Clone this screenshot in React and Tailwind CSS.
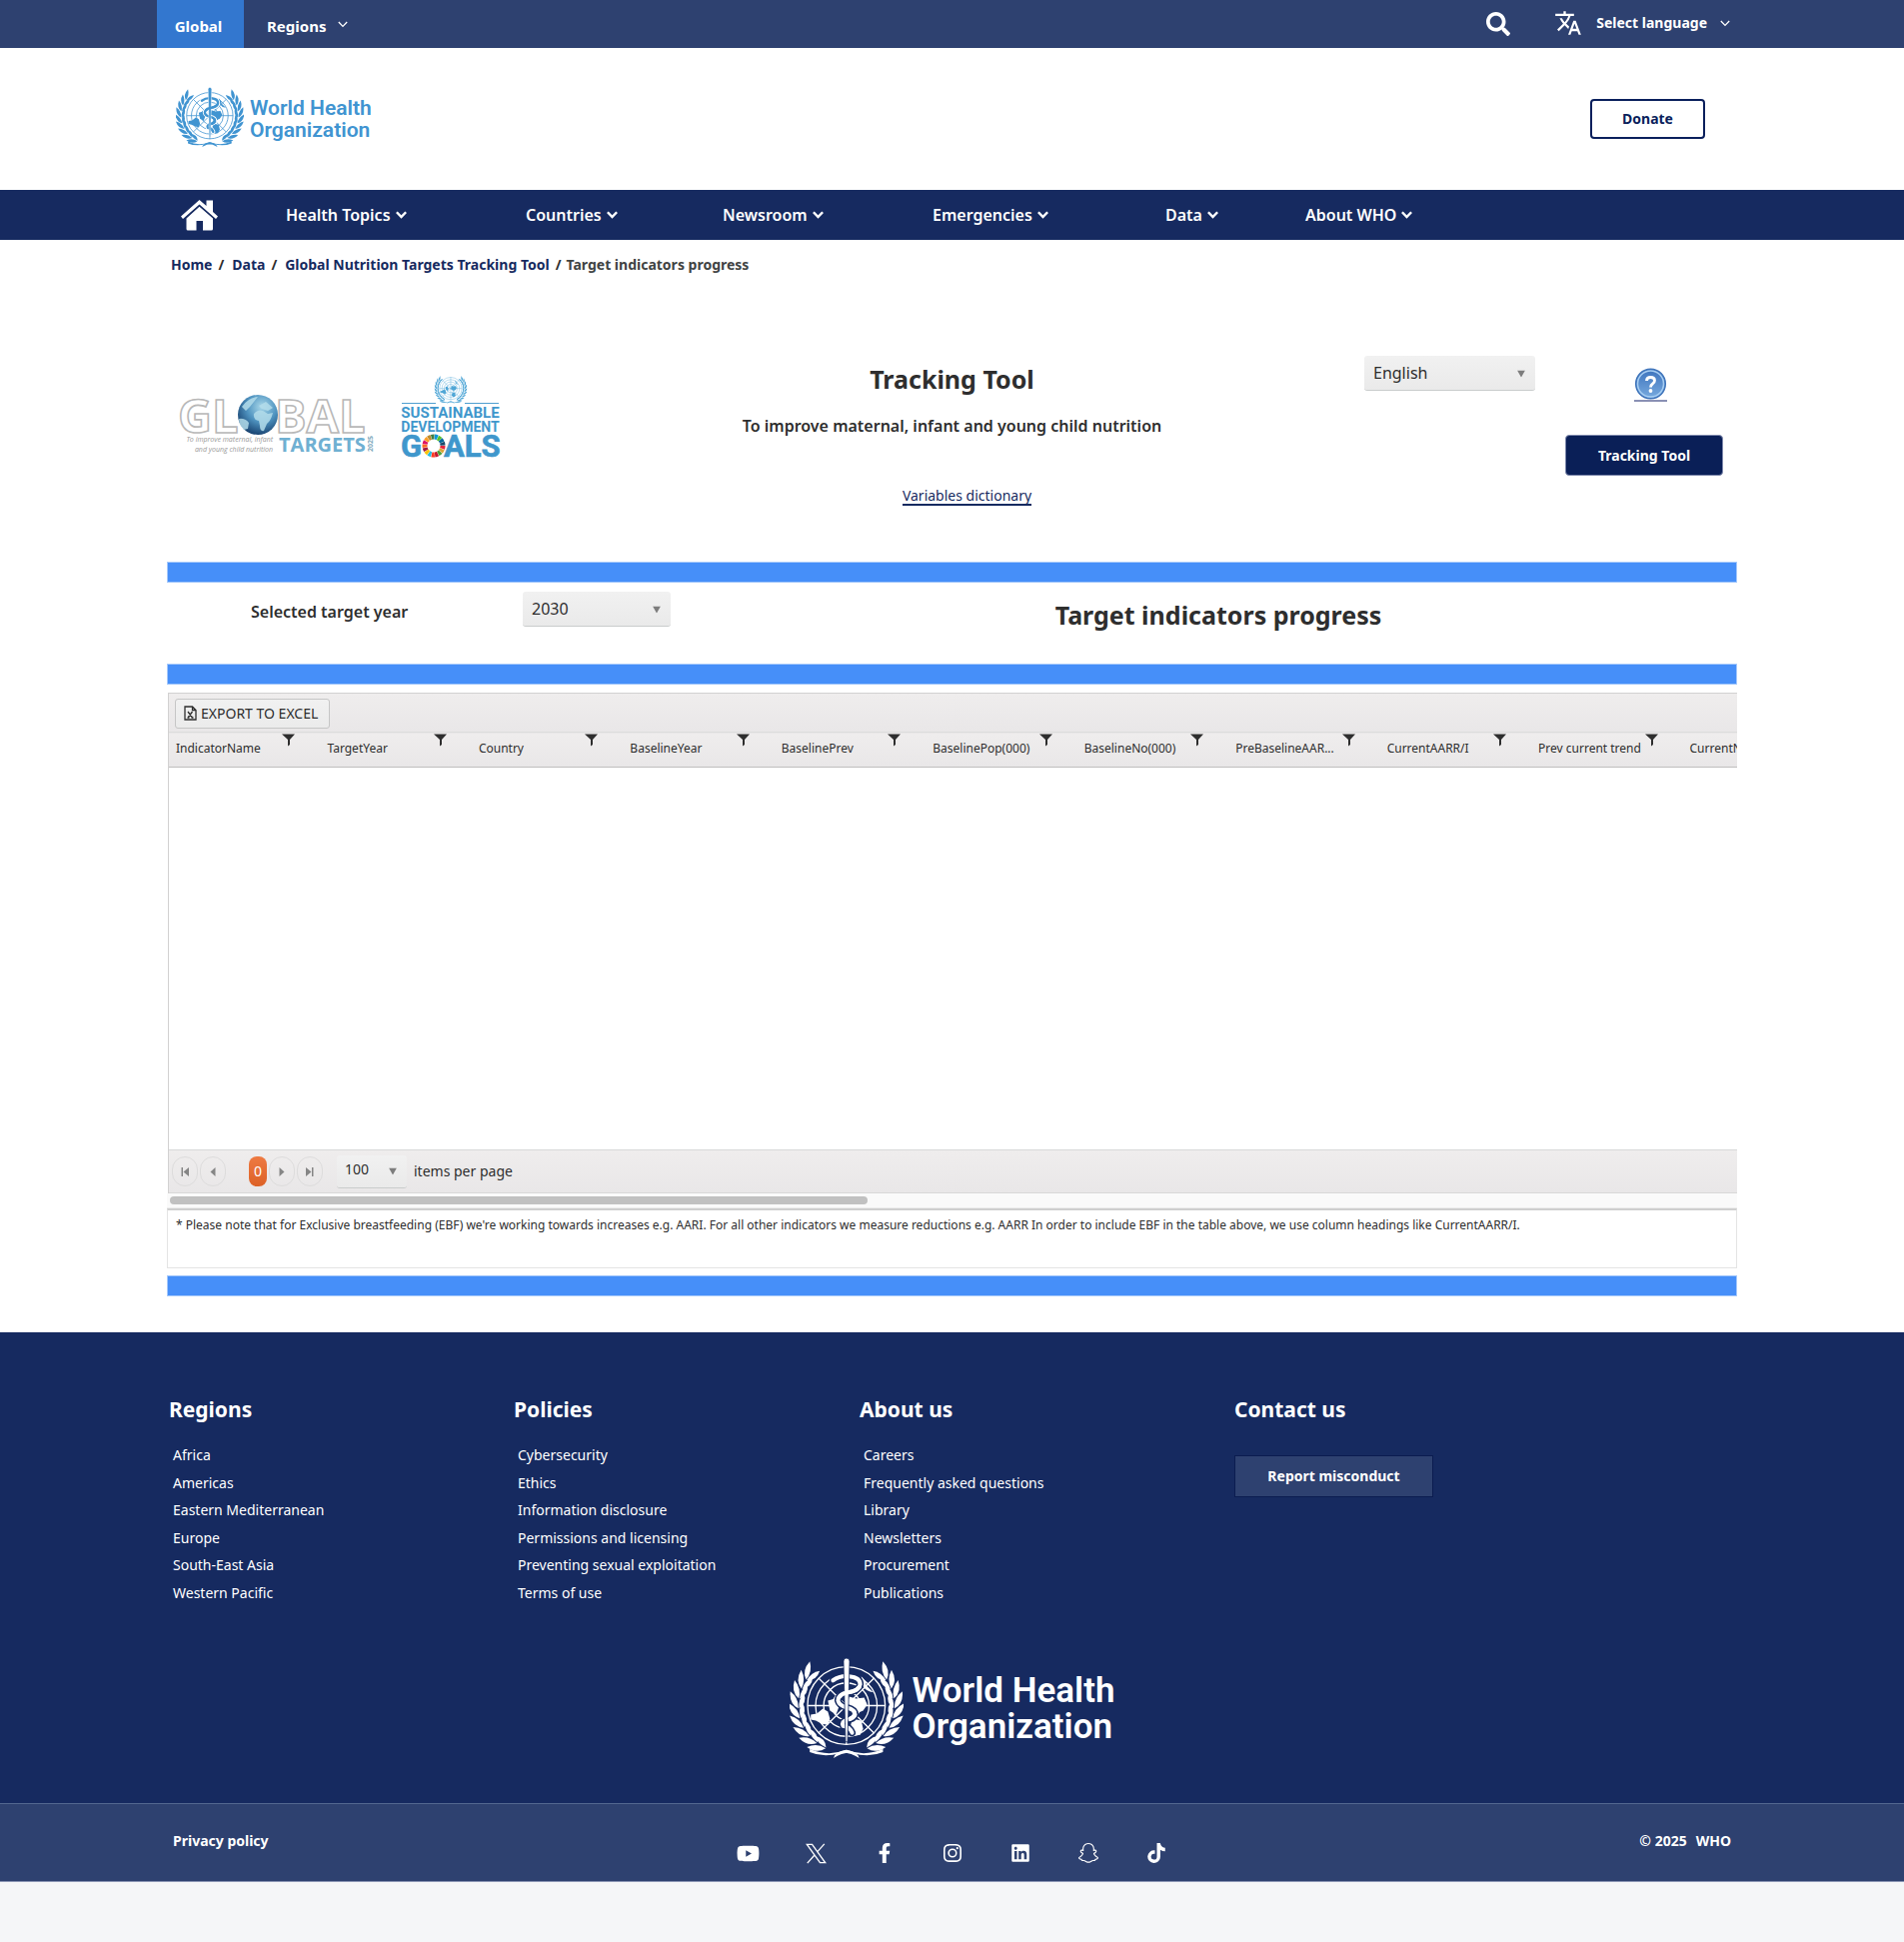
import React from "react";
import { FaSearch, FaFacebookF, FaYoutube, FaLinkedin, FaTiktok } from "react-icons/fa";
import { MdTranslate } from "react-icons/md";
import { BsInstagram, BsSnapchat } from "react-icons/bs";

const NAVY = "#162a60";

function Chevron({ className, width = 1.3 }) {
  return (
    <svg viewBox="0 0 10 7" className={className} fill="none" stroke="currentColor" strokeWidth={width} aria-hidden="true">
      <path d="M0.8 1 L5 5.4 L9.2 1" />
    </svg>
  );
}

function XLogo({ className }) {
  return (
    <svg viewBox="0 0 24 24" className={className} fill="none" stroke="currentColor" strokeWidth="1.5" aria-hidden="true">
      <path d="M1.500 1.500H7.500L22.500 22.500H16.500Z M21.500 1L13.300 10.200 M10.500 13.500L2 23" />
    </svg>
  );
}

function Laurel() {
  const leaves = [];
  for (let i = 0; i < 9; i++) {
    const deg = 118 + i * 12.2;
    const a = (deg * Math.PI) / 180;
    const x = 56.5 + 48 * Math.cos(a);
    const y = 47 + 47 * Math.sin(a);
    leaves.push(
      <g key={i} transform={`translate(${x} ${y}) rotate(${deg - 180})`}>
        <path d="M0 2 Q-9 -3 -7.500 -15 Q1 -8 0 2Z" />
        <path d="M1 2 Q0 -7 6 -13 Q9 -3 1 2Z" />
      </g>
    );
  }
  return (
    <g>
      {leaves}
      <path d="M20 90 Q38 98 56 91 Q68 93 69 99 Q60 93 50 94 Q34 99 20 93Z" />
    </g>
  );
}

function Emblem({ className, color, back, staff = true }) {
  return (
    <svg viewBox="0 0 113 100" className={className} fill={color} aria-hidden="true">
      <g fill="none" stroke={color} strokeWidth="1.3">
        <circle cx="56.3" cy="47" r="38.5" />
        <circle cx="56.3" cy="47" r="30.5" />
        <circle cx="56.3" cy="47" r="22.5" />
        <circle cx="56.3" cy="47" r="14" />
        <path d="M18 47H95M56.3 8V86M29 20L83.500 74M83.500 20L29 74" />
      </g>
      <path d="M21 56 L27 55 L33 50 L38 53 L40 60 L38 66 L32 65 L26 62 L21 61Z" />
      <path d="M59 38 L66 40 L74 39 L77 46 L73 52 L66 55 L61 52 L57 49Z" />
      <path d="M62 60 L71 62 L73 70 L70 76 L64 77 L60 70Z" />
      <path d="M38 42 L45 40 L49 48 L46 56 L40 52Z" />
      <path d="M71 18 Q76 22 76 27 L83 34 Q76 33 73 28Z" />
      {staff && (
        <g>
          <g fill="none" strokeLinecap="round">
            {[[back, 7], [color, 4]].map(([c, w]) => (
              <path
                key={w}
                stroke={c}
                strokeWidth={w}
                d="M43 22 Q50 17 59 18 Q70 19 70 26 Q69 32 58 34 Q48 36 48 42 Q49 47 57 49 Q65 51 65 56 Q64 60 57 61 Q51 63 53 67 Q60 68 62 74"
              />
            ))}
          </g>
          <path d="M53.500 3 Q53.500 0 56.300 0 Q59.500 0 59.500 3 L57.500 83 H55.500Z" stroke={back} strokeWidth="0.800" />
          <path fill="none" stroke={color} strokeWidth="4" strokeLinecap="round" d="M69 29 Q66 33 58 34 Q52 35 50 38 M64 53 Q66 57 60 60" />
        </g>
      )}
      <Laurel />
      <g transform="translate(112.600 0) scale(-1 1)">
        <Laurel />
      </g>
    </svg>
  );
}

function HomeIcon() {
  return (
    <svg viewBox="0 0 37 31" className="h-[31px] w-[37px]" fill="white" aria-hidden="true">
      <path d="M18.500 0 L25.500 6 V0.500 H32 V12 L37 16.500 L35 19 L18.500 4.600 L2 19 L0 16.500Z" />
      <path d="M18.500 6.800 L32 18.600 V29 Q32 30.500 30.500 30.500 H22 V21 H15.500 V30.500 H7 Q5.500 30.500 5.500 29 V18.600Z" />
    </svg>
  );
}

function Funnel() {
  return (
    <svg viewBox="0 0 13 13" className="h-[13px] w-[13px]" fill="#2e2e2e" aria-hidden="true">
      <path d="M0 0.500H13L8 6V11L6 12.500V6Z" />
    </svg>
  );
}

function DropDown({ label, value, options, className, arrow }) {
  return (
    <div className="relative inline-flex">
      <select
        aria-label={label}
        defaultValue={value}
        className={"appearance-none rounded-[3px] border-b border-[#c9cccc] bg-linear-to-b from-[#f1f1f1] to-[#eaeaea] text-[#2e2e2e] outline-none " + className}
      >
        {options.map((o) => (
          <option key={o}>{o}</option>
        ))}
      </select>
      <svg viewBox="0 0 8 7" className={"pointer-events-none absolute top-1/2 h-[7px] w-[8px] -translate-y-1/2 " + arrow} fill="#7d7d7d" aria-hidden="true">
        <path d="M0 0H8L4 7Z" />
      </svg>
    </div>
  );
}

function GlobalTargetsLogo() {
  return (
    <svg viewBox="0 0 196 62" className="h-[62px] w-[196px] overflow-visible" role="img" aria-label="Global Targets 2025">
      <defs>
        <radialGradient id="globe" cx="0.600" cy="0.300" r="0.750">
          <stop offset="0" stopColor="#a9d8ea" />
          <stop offset="0.500" stopColor="#4f93c0" />
          <stop offset="1" stopColor="#123a68" />
        </radialGradient>
      </defs>
      <g fontFamily="Open Sans, sans-serif" fontWeight="700" fontSize="47" fill="white" stroke="#b8b8b8" strokeWidth="1.600">
        <text x="-2" y="38">GL</text>
        <text x="95" y="38">BAL</text>
      </g>
      <circle cx="78" cy="20" r="20" fill="url(#globe)" />
      <path fill="#b3dcea" d="M74 19 Q78 14 83 16 L88 19 L93 18 Q91 26 87 29 L84 36 Q80 37 80 31 L79 26 Q73 25 74 19Z M59 24 Q65 23 69 28 L68 34 L64 35 Q59 30 59 24Z M62 12 Q68 3 78 2 L74 7 L70 12 L66 16Z M79 11 L86 7 L93 13 L88 16 L82 14Z" opacity="0.850" />
      <g fontFamily="Open Sans, sans-serif" fontStyle="italic" fontSize="7" fill="#999999" textAnchor="end">
        <text x="93" y="47">To improve maternal, infant</text>
        <text x="93" y="57">and young child nutrition</text>
      </g>
      <text x="99" y="57" fontFamily="Open Sans, sans-serif" fontWeight="700" fontSize="20" fill="#6fb0d2">TARGETS</text>
      <text transform="translate(193 57) rotate(-90)" fontFamily="Open Sans, sans-serif" fontWeight="700" fontSize="7" fill="#7fa9bd">2025</text>
    </svg>
  );
}

const SDG = ["#e5243b", "#dda63a", "#4c9f38", "#c5192d", "#ff3a21", "#26bde2", "#fcc30b", "#a21942", "#fd6925", "#dd1367", "#fd9d24", "#bf8b2e", "#3f7e44", "#0a97d9", "#56c02b", "#00689d", "#19486a"];

function SdgLogo() {
  return (
    <svg viewBox="0 0 100 84" className="h-[84px] w-[100px] overflow-visible" role="img" aria-label="Sustainable Development Goals">
      <svg x="33" y="0" width="34" height="29" viewBox="0 0 113 100">
        <Emblem color="#4fa6d6" back="white" staff={false} />
      </svg>
      <path d="M1 28.500H35M64 28.500H98" stroke="#4f9fcf" strokeWidth="1" />
      <g fill="#3f97cc" fontFamily="Roboto, sans-serif" fontWeight="700" textAnchor="middle">
        <text x="49.500" y="43" fontSize="15">SUSTAINABLE</text>
        <text x="49.500" y="57" fontSize="14">DEVELOPMENT</text>
      </g>
      <g fill="#3f97cc" stroke="#3f97cc" strokeWidth="0.600" fontFamily="Roboto, sans-serif" fontWeight="700" fontSize="31">
        <text x="0" y="82">G</text>
        <text x="43" y="82">ALS</text>
      </g>
      <g transform="translate(33 71)">
        {SDG.map((c, i) => (
          <circle key={c} r="9" fill="none" stroke={c} strokeWidth="5" pathLength="170" strokeDasharray="9 161" strokeDashoffset={-i * 10} />
        ))}
      </g>
    </svg>
  );
}

const nav = ["Health Topics", "Countries", "Newsroom", "Emergencies", "Data", "About WHO"];
const columns = ["IndicatorName", "TargetYear", "Country", "BaselineYear", "BaselinePrev", "BaselinePop(000)", "BaselineNo(000)", "PreBaselineAAR...", "CurrentAARR/I", "Prev current trend", "CurrentNo(000)"];
const footer = [
  ["Regions", ["Africa", "Americas", "Eastern Mediterranean", "Europe", "South-East Asia", "Western Pacific"]],
  ["Policies", ["Cybersecurity", "Ethics", "Information disclosure", "Permissions and licensing", "Preventing sexual exploitation", "Terms of use"]],
  ["About us", ["Careers", "Frequently asked questions", "Library", "Newsletters", "Procurement", "Publications"]],
];
const social = [
  ["YouTube", FaYoutube, "size-[23px]"],
  ["X", XLogo, "size-[21px]"],
  ["Facebook", FaFacebookF, "size-[20px]"],
  ["Instagram", BsInstagram, "size-[18px]"],
  ["LinkedIn", FaLinkedin, "size-[20px]"],
  ["Snapchat", BsSnapchat, "size-[20px]"],
  ["TikTok", FaTiktok, "size-[20px]"],
];

const Bar = () => <div className="h-[21px] border border-[#a3c7fb] bg-[#468ff9]" />;

function PageButton({ label, d }) {
  return (
    <button aria-label={label} className="flex h-[30px] w-[26px] items-center justify-center rounded-full border border-[#dddcdc]">
      <svg viewBox="0 0 8 9" className="h-[9px] w-[8px]" fill="#858585" aria-hidden="true">
        <path d={d} />
      </svg>
    </button>
  );
}

export default function App() {
  return (
    <div className="min-h-screen bg-[#f5f6f8] font-['Noto_Sans',sans-serif] text-[#2e2e2e]">
      <div className="bg-[#2e4170] text-white">
        <div className="mx-auto flex h-12 max-w-[1591px] text-sm font-bold">
          <a href="#global" className="flex w-[87px] items-center justify-center bg-[#3377cf] pt-[5px] pr-1 text-[15px]">Global</a>
          <button className="flex items-center gap-3 pt-[5px] pl-[23px] text-[15px] font-bold">
            Regions <Chevron className="mb-[5px] h-[7px] w-[10px]" />
          </button>
          <button aria-label="Search" className="mr-[44px] ml-auto">
            <FaSearch className="size-6" />
          </button>
          <button className="mr-[17px] flex items-center pb-[2px] font-bold">
            <MdTranslate className="mr-[14px] size-[28px]" />
            Select language
            <Chevron className="ml-[13px] h-[7px] w-[10px]" />
          </button>
        </div>
      </div>

      <header className="bg-white">
        <div className="mx-auto flex h-[142px] max-w-[1571px] items-center justify-between pr-[32px] pl-[9px]">
          <a href="#home" className="flex items-center gap-[6px] text-[#4094d1]" aria-label="World Health Organization">
            <Emblem className="mb-1 h-[61px] w-[68px]" color="#4094d1" back="white" />
            <span className="font-['Roboto',sans-serif] text-[21px] leading-[22px] font-semibold">
              World Health<br />Organization
            </span>
          </a>
          <button className="h-10 w-[115px] rounded-[4px] border-2 border-[#0a1f5c] text-sm font-bold text-[#0a1f5c]">Donate</button>
        </div>
      </header>

      <nav className="bg-[#162a60] text-white">
        <div className="mx-auto flex h-[50px] max-w-[1571px] items-center pl-[14px]">
          <a href="#home" aria-label="Home" className="w-[105px]"><HomeIcon /></a>
          <div className="grid flex-1 grid-cols-[240fr_197fr_210fr_233fr_140fr_432fr]">
            {nav.map((n) => (
              <button key={n} className="flex items-center gap-[5px] text-base font-semibold whitespace-nowrap">
                {n} <Chevron width={2.2} className="h-[8px] w-[11px]" />
              </button>
            ))}
          </div>
        </div>
      </nav>

      <main className="bg-white pb-9">
        <div className="mx-auto max-w-[1571px]">
          <div className="flex h-[50px] items-center pl-1 text-sm font-bold">
            <a href="#home" className="text-[#162a60]">Home</a>
            <span className="mr-2 ml-[6px]">/</span>
            <a href="#data" className="text-[#162a60]">Data</a>
            <span className="mr-2 ml-[6px]">/</span>
            <a href="#tool" className="text-[#162a60]">Global Nutrition Targets Tracking Tool</a>
            <span className="mr-[5px] ml-[6px]">/</span>
            <span className="text-[#3f4343]">Target indicators progress</span>
          </div>

          <div className="grid h-[272px] grid-cols-[1fr_430px_1fr] pt-[66px]">
            <div className="flex items-start gap-[25px] pl-[13px]">
              <div className="pt-[39px]"><GlobalTargetsLogo /></div>
              <div className="pt-[19px]"><SdgLogo /></div>
            </div>
            <div className="text-center">
              <h1 className="pt-[3px] text-[25px] leading-[40px] font-bold">Tracking Tool</h1>
              <h2 className="pt-[15px] text-base leading-[24px] font-semibold">To improve maternal, infant and young child nutrition</h2>
              <a href="#variables" className="mt-[49px] ml-[30px] inline-block border-b-2 border-[#162a60] text-sm leading-[17px] text-[#162a60]">Variables dictionary</a>
            </div>
            <div className="flex items-start justify-end">
              <DropDown label="Language" value="English" options={["English", "Français", "Español"]} className="h-[35px] w-[171px] pl-[9px] text-base" arrow="right-[10px]" />
              <div className="mr-[14px] ml-[30px] flex flex-col items-end pt-3">
                <a href="#help" aria-label="Help" className="mr-[56px] border-b-2 border-[#8a90b4]">
                  <svg viewBox="0 0 33 32" className="h-8 w-[33px]" aria-hidden="true">
                    <defs>
                      <linearGradient id="help" x1="0" y1="0" x2="0" y2="1">
                        <stop offset="0" stopColor="#3d73bd" />
                        <stop offset="1" stopColor="#78abdf" />
                      </linearGradient>
                    </defs>
                    <circle cx="16.500" cy="16" r="14.800" fill="url(#help)" stroke="#3f74ba" strokeWidth="1.500" />
                    <circle cx="16.500" cy="16" r="13" fill="none" stroke="#a6cdf2" strokeWidth="1.500" />
                    <path d="M12.500 13 Q12.500 9.500 16.500 9.500 Q20.500 9.500 20.500 12.700 Q20.500 14.500 18.500 16 Q16.500 17.200 16.500 19.500" fill="none" stroke="white" strokeWidth="2.800" />
                    <circle cx="16.500" cy="23" r="1.900" fill="white" />
                  </svg>
                </a>
                <button className="mt-[33px] h-[41px] w-[158px] rounded-[4px] border border-[#7d88ac] bg-[#0a1f57] text-sm font-bold text-white">Tracking Tool</button>
              </div>
            </div>
          </div>

          <Bar />
          <div className="flex h-[81px] items-start">
            <div className="w-[356px] pt-[17px] pl-[84px] text-base leading-[24px] font-semibold">Selected target year</div>
            <div className="pt-[9px]">
              <DropDown label="Selected target year" value="2030" options={["2025", "2030"]} className="h-[35px] w-[148px] pl-[9px] text-base" arrow="right-[10px]" />
            </div>
            <h2 className="flex-1 pt-[12px] pl-[29px] text-center text-[25px] leading-[40px] font-bold">Target indicators progress</h2>
          </div>
          <Bar />

          <section className="mt-2 ml-px overflow-hidden border-t border-l border-[#d2d1d1]">
            <div className="flex h-[38px] items-center bg-linear-to-b from-[#efeded] to-[#e9e7e8] pt-px pl-[6px]">
              <button className="flex h-[30px] items-center gap-1 rounded-[3px] border border-[#c6c6c6] bg-linear-to-b from-[#f1f1f1] to-[#ebebeb] pr-[11px] pl-2 text-sm">
                <svg viewBox="0 0 13 15" className="h-[15px] w-[13px]" fill="none" stroke="#2e2e2e" strokeWidth="1.300" aria-hidden="true">
                  <path d="M1 1H8.500L12 4.500V14H1Z M8.500 1V4.500H12 M4 6L8.500 12M8.500 6L4 12M3.500 12H5.500M7.500 12H9.500" />
                </svg>
                EXPORT TO EXCEL
              </button>
            </div>
            <table className="w-[1666px] table-fixed border-collapse">
              <thead>
                <tr className="h-[35px] border-t border-b border-t-[#dcdcdc] border-b-[#bfbebe] bg-linear-to-b from-[#efeded] to-[#e9e7e8]">
                  {columns.map((c) => (
                    <th key={c} scope="col" className="p-0 text-left align-top text-xs font-normal">
                      <div className="flex justify-between pr-[25px] pl-[7px]">
                        <span className="pt-[8px] whitespace-nowrap">{c}</span>
                        <button aria-label={"Filter " + c} className="-ml-4 h-[13px] w-[13px] pt-px"><Funnel /></button>
                      </div>
                    </th>
                  ))}
                </tr>
              </thead>
            </table>
            <div className="h-[382px] bg-white" />
            <div className="flex h-[44px] items-center border-t border-b border-[#d8d8d8] bg-linear-to-b from-[#efeded] to-[#e9e7e8] pl-[3px]">
              <div className="flex gap-[2px]">
                <PageButton label="First page" d="M0.500 0H2V9H0.500Z M8 0V9L2.500 4.500Z" />
                <PageButton label="Previous page" d="M6.500 0V9L1.500 4.500Z" />
              </div>
              <button className="mr-[2px] ml-[23px] h-[30px] w-[18px] rounded-[8px] bg-linear-to-b from-[#ee7a42] to-[#dd6125] text-sm text-white">0</button>
              <div className="flex gap-[2px]">
                <PageButton label="Next page" d="M1.500 0V9L6.500 4.500Z" />
                <PageButton label="Last page" d="M6 0H7.500V9H6Z M0 0V9L5.500 4.500Z" />
              </div>
              <div className="ml-[14px]">
                <DropDown label="Items per page" value="100" options={["100", "200"]} className="h-[33px] w-[70px] pb-1 pl-2 text-sm" arrow="right-[10px]" />
              </div>
              <span className="ml-[7px] text-sm">items per page</span>
            </div>
          </section>
          <div className="h-[15px] border-b border-[#eeeeee] bg-[#fafafa] px-[3px] pt-[3px]">
            <div className="h-[8px] w-[44.600%] rounded-full bg-[#c1c1c1]" />
          </div>
          <p className="h-[60px] border border-t-2 border-[#e4e4e4] border-t-[#cfcfcf] bg-white px-2 pt-[6px] text-xs leading-[18px]">
            * Please note that for Exclusive breastfeeding (EBF) we're working towards increases e.g. AARI. For all other indicators we measure reductions e.g. AARR In order to include EBF in the table above, we use column headings like CurrentAARR/I.
          </p>
          <div className="h-[7px]" />
          <Bar />
        </div>
      </main>

      <footer className="text-white">
        <div className="bg-[#162a60] pt-[61px] pb-[44px]">
          <div className="mx-auto grid max-w-[1571px] grid-cols-[345fr_346fr_375fr_503fr] pl-[2px]">
            {footer.map(([title, links]) => (
              <div key={title}>
                <h3 className="text-[21px] leading-[32px] font-bold">{title}</h3>
                <ul className="mt-[16px] grid h-[165px] grid-rows-6 pl-1 text-sm leading-[27px]">
                  {links.map((l) => (
                    <li key={l}><a href={"#" + l}>{l}</a></li>
                  ))}
                </ul>
              </div>
            ))}
            <div>
              <h3 className="text-[21px] leading-[32px] font-bold">Contact us</h3>
              <button className="mt-[30px] h-[42px] w-[199px] border border-[#0b1c50] bg-[#2e4170] text-sm font-bold">Report misconduct</button>
            </div>
          </div>
          <div className="mt-[52px] flex justify-center gap-[9px]">
            <Emblem className="h-[101px] w-[114px]" color="white" back={NAVY} />
            <span className="self-center font-['Roboto',sans-serif] text-[35px] leading-[36px] font-semibold">
              World Health<br />Organization
            </span>
          </div>
        </div>
        <div className="border-t border-b border-t-[#53668f] border-b-[#8a95b4] bg-[#2e4170]">
          <div className="mx-auto grid h-[77px] max-w-[1571px] grid-cols-[1fr_auto_1fr] pr-[6px] pl-[6px] text-sm font-bold">
            <a href="#privacy" className="pt-[27px]">Privacy policy</a>
            <div className="flex items-center pt-[21px]">
              {social.map(([name, Icon, size]) => (
                <a key={name} href={"#" + name} aria-label={name} className="flex w-[68px] justify-center"><Icon className={size} /></a>
              ))}
            </div>
            <div className="flex justify-end gap-[9px] pt-[27px]"><span>© 2025</span><span>WHO</span></div>
          </div>
        </div>
      </footer>
    </div>
  );
}
